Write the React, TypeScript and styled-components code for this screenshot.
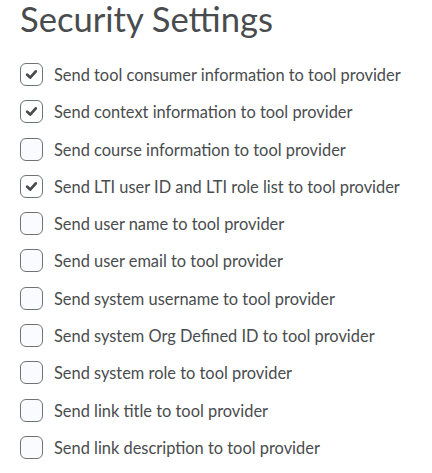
import { createGlobalStyle } from 'styled-components'
import styled from 'styled-components'

const GlobalStyle = createGlobalStyle`
  body {
    margin: 0;
    background: #ffffff;
    font-family: Lato, "Noto Sans", sans-serif;
    color: #494c4e;
  }
`

const Page = styled.div`
  padding: 0 20px;
`

const Title = styled.h2`
  font-size: 34.6px;
  font-weight: 400;
  line-height: 37px;
  margin: 0 0 26px;
  color: #494c4e;
`

const List = styled.div`
  display: flex;
  flex-direction: column;
  gap: 14.3px;
`

const Row = styled.label`
  display: flex;
  align-items: center;
  gap: 11px;
  font-size: 16.4px;
  line-height: 23px;
  cursor: pointer;
`

const Box = styled.span<{ $checked: boolean }>`
  box-sizing: border-box;
  width: 23px;
  height: 23px;
  flex: none;
  border: 1px solid #6e7376;
  border-radius: 6px;
  background: ${p => (p.$checked ? '#ffffff' : '#f9fbff')};
  display: flex;
  align-items: center;
  justify-content: center;
`

const options = [
  { label: 'Send tool consumer information to tool provider', checked: true },
  { label: 'Send context information to tool provider', checked: true },
  { label: 'Send course information to tool provider', checked: false },
  { label: 'Send LTI user ID and LTI role list to tool provider', checked: true },
  { label: 'Send user name to tool provider', checked: false },
  { label: 'Send user email to tool provider', checked: false },
  { label: 'Send system username to tool provider', checked: false },
  { label: 'Send system Org Defined ID to tool provider', checked: false },
  { label: 'Send system role to tool provider', checked: false },
  { label: 'Send link title to tool provider', checked: false },
  { label: 'Send link description to tool provider', checked: false },
]

function Check() {
  return (
    <svg width="13" height="13" viewBox="0 0 13 13">
      <path
        d="M2.2 6.8 L5.2 9.6 L10.8 3.4"
        fill="none"
        stroke="#494c4e"
        strokeWidth="2.8"
        strokeLinecap="round"
        strokeLinejoin="round"
      />
    </svg>
  )
}

export default function App() {
  return (
    <Page>
      <GlobalStyle />
      <Title>Security Settings</Title>
      <List>
        {options.map(o => (
          <Row key={o.label}>
            <Box $checked={o.checked}>{o.checked && <Check />}</Box>
            <span>{o.label}</span>
          </Row>
        ))}
      </List>
    </Page>
  )
}
